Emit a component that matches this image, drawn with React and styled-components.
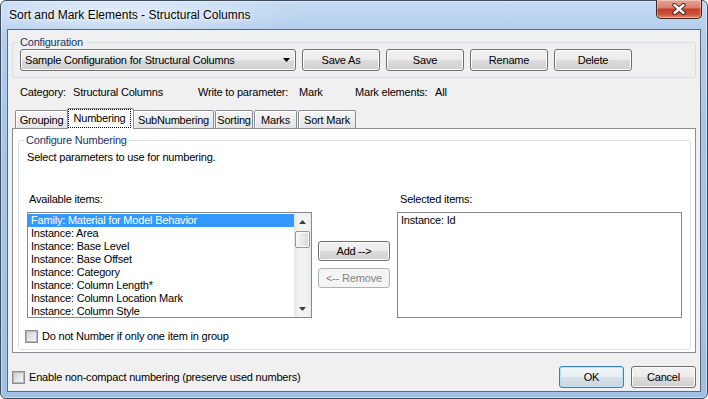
import React from 'react';
import styled, { createGlobalStyle, css } from 'styled-components';

const GlobalStyle = createGlobalStyle`
  html, body { margin: 0; padding: 0; background: #ffffff; }
  body {
    font-family: "Liberation Sans", Arial, sans-serif;
    font-size: 11px;
    letter-spacing: -0.2px;
    color: #000;
  }
  * { box-sizing: border-box; }
`;

const Window = styled.div`
  width: 708px;
  height: 399px;
  display: flex;
  flex-direction: column;
  border: 1px solid #3a4b60;
  border-radius: 6px;
  background:
    radial-gradient(ellipse 260px 40px at 120px 12px, rgba(255,255,255,0.55), rgba(255,255,255,0) 70%),
    linear-gradient(180deg, #c3daf3 0px, #b5cfed 28px, #a7c6e8 120px, #a0c0e3 100%);
  box-shadow: inset 0 0 0 1px rgba(255,255,255,0.45);
`;

const TitleBar = styled.div`
  height: 28px;
  flex: none;
  display: flex;
  align-items: center;
  justify-content: space-between;
  padding-left: 8px;
`;

const Title = styled.div`
  font-size: 12px;
  letter-spacing: 0;
  color: #000;
  text-shadow: 0 0 6px rgba(255,255,255,0.9), 0 0 2px rgba(255,255,255,0.9);
`;

const CloseButton = styled.div`
  align-self: flex-start;
  width: 46px;
  height: 19px;
  margin: -1px 5px 0 0;
  border: 1px solid #4a1f17;
  border-top: none;
  border-radius: 0 0 5px 5px;
  background: linear-gradient(180deg, #e6a597 0%, #d98170 42%, #c2402a 52%, #c9513a 78%, #e08b6c 100%);
  box-shadow: inset 0 0 0 1px rgba(255,255,255,0.35);
  display: flex;
  align-items: center;
  justify-content: center;
`;

const Client = styled.div`
  flex: 1;
  margin: 0 6px 6px 6px;
  border: 1px solid #586a80;
  background: #f0f0f0;
  display: flex;
  flex-direction: column;
  padding: 0 4px;
`;

const GroupBox = styled.div`
  margin-top: ${p => p.$top}px;
  border: 1px solid #d5dfe5;
  border-radius: 3px;
  display: flex;
  flex-direction: column;
  background: ${p => p.$bg};
`;

const GroupTitle = styled.div`
  align-self: flex-start;
  margin: -7px 0 0 ${p => p.$offset}px;
  padding: 0 2px;
  line-height: 13px;
  background: ${p => p.$bg};
  color: #1a3560;
`;

const ConfigRow = styled.div`
  display: flex;
  align-items: center;
  gap: 6px;
  padding: 0 0 6px 7px;
`;

const buttonBase = css`
  height: 22px;
  font: inherit;
  letter-spacing: inherit;
  color: #000;
  border: 1px solid #707070;
  border-radius: 3px;
  background: linear-gradient(180deg, #f2f2f2 0%, #ebebeb 50%, #dddddd 50%, #cfcfcf 100%);
  box-shadow: inset 0 0 0 1px #fcfcfc;
`;

const Combo = styled.div`
  ${buttonBase};
  width: 276px;
  display: flex;
  align-items: center;
  justify-content: space-between;
  padding: 0 5px 0 4px;
  white-space: nowrap;
`;

const Button = styled.button`
  ${buttonBase};
  width: ${p => p.$w}px;
  height: ${p => p.$h || 22}px;
  padding: 0;
  flex: none;
  ${p => p.$default && css`
    border-color: #3c7fb1;
    box-shadow: inset 0 0 0 1px #b6e3fa;
    background: linear-gradient(180deg, #f1f5f8 0%, #e8eef2 50%, #d8e1e8 50%, #cbd6de 100%);
  `}
  ${p => p.disabled && css`
    color: #838383;
    border-color: #adb2b5;
    background: #f4f4f4;
    box-shadow: none;
  `}
`;

const InfoRow = styled.div`
  margin-top: 8px;
  padding-left: 8px;
  display: grid;
  grid-template-columns: 53px 125px 101px 56px 80px auto;
  line-height: 13px;
  white-space: nowrap;
`;

const TabControl = styled.div`
  margin-top: 9px;
  display: flex;
  flex-direction: column;
`;

const TabStrip = styled.div`
  height: 20px;
  display: flex;
  align-items: flex-end;
  gap: 1px;
  padding-left: 3px;
`;

const Tab = styled.div`
  width: ${p => p.$w}px;
  height: 18px;
  flex: none;
  border: 1px solid #898c95;
  border-bottom: none;
  border-radius: 2px 2px 0 0;
  background: linear-gradient(180deg, #f6f6f6 0%, #ececec 55%, #e3e3e3 100%);
  box-shadow: inset 1px 1px 0 #ffffff;
  display: flex;
  align-items: center;
  justify-content: center;
  line-height: 13px;
  padding-top: 1px;
  white-space: nowrap;
  ${p => p.$active && css`
    height: 21px;
    margin: 0 -2px -1px -2px;
    position: relative;
    z-index: 1;
    background: #ffffff;
    box-shadow: none;
    align-items: stretch;
    padding-top: 0;
  `}
`;

const FocusRect = styled.span`
  flex: 1;
  margin: 0 2px 1px 0;
  border: 1px dotted #000;
  display: flex;
  align-items: center;
  justify-content: center;
`;

const TabPanel = styled.div`
  border: 1px solid #898c95;
  background: #ffffff;
  padding: 0 4px 2px 5px;
  display: flex;
  flex-direction: column;
`;

const GroupContent = styled.div`
  padding: 0 8px 6px 8px;
  display: flex;
  flex-direction: column;
`;

const Line = styled.div`
  line-height: 13px;
  margin-top: ${p => p.$top || 0}px;
  white-space: nowrap;
`;

const Columns = styled.div`
  margin-top: 29px;
  display: grid;
  grid-template-columns: 285px 73px 285px;
  column-gap: 6px;
`;

const ListColumn = styled.div`
  display: flex;
  flex-direction: column;
`;

const ListLabel = styled.div`
  line-height: 13px;
  padding-left: ${p => p.$pl}px;
  margin-bottom: 6px;
`;

const ListBox = styled.div`
  height: 106px;
  border: 1px solid #828790;
  background: #ffffff;
  display: flex;
  overflow: hidden;
`;

const ListItems = styled.div`
  flex: 1;
  min-width: 0;
  padding-top: 1px;
  display: flex;
  flex-direction: column;
`;

const ListItem = styled.div`
  height: 13px;
  line-height: 13px;
  flex: none;
  padding-left: 3px;
  white-space: nowrap;
  overflow: hidden;
  ${p => p.$selected && css`
    background: #3399ff;
    color: #ffffff;
  `}
`;

const ScrollBar = styled.div`
  width: 17px;
  flex: none;
  display: flex;
  flex-direction: column;
  background: linear-gradient(90deg, #e6e6e6 0%, #f3f3f3 30%, #f3f3f3 70%, #ececec 100%);
`;

const ScrollArrow = styled.div`
  height: 17px;
  flex: none;
  display: flex;
  align-items: center;
  justify-content: center;
`;

const ScrollThumb = styled.div`
  height: 17px;
  margin: 1px 1px 0 1px;
  border: 1px solid #979797;
  border-radius: 2px;
  background: linear-gradient(90deg, #f5f5f5 0%, #e9e9e9 50%, #d9d9d9 100%);
  box-shadow: inset 0 0 0 1px #fbfbfb;
`;

const ScrollSpacer = styled.div`
  flex: 1;
`;

const MiddleColumn = styled.div`
  padding-top: 48px;
  display: flex;
  flex-direction: column;
  gap: 7px;
`;

const CheckRow = styled.div`
  display: flex;
  align-items: center;
  gap: ${p => p.$gap}px;
  margin: ${p => p.$margin};
  line-height: 13px;
  white-space: nowrap;
`;

const CheckBox = styled.span`
  width: 13px;
  height: 13px;
  flex: none;
  border: 1px solid #8e8f8f;
  background: #f7f7f7;
  display: flex;
  align-items: center;
  justify-content: center;
  &::after {
    content: '';
    width: 9px;
    height: 9px;
    border: 1px solid #b3b6bb;
    background: linear-gradient(135deg, #cdd1d6 0%, #e4e6e8 55%, #f7f7f7 100%);
  }
`;

const BottomRow = styled.div`
  margin-top: 13px;
  height: 22px;
  display: flex;
  align-items: center;
  justify-content: space-between;
`;

const ButtonGroup = styled.div`
  display: flex;
  gap: 7px;
`;

const DownTriangle = ({ color = '#000' }) => (
  <svg width="7" height="4" viewBox="0 0 7 4"><path d="M0 0 H7 L3.5 4 Z" fill={color} /></svg>
);

const UpTriangle = ({ color = '#000' }) => (
  <svg width="7" height="4" viewBox="0 0 7 4"><path d="M0 4 H7 L3.5 0 Z" fill={color} /></svg>
);

const CloseGlyph = () => (
  <svg width="16" height="12" viewBox="0 0 16 12">
    <path d="M3.5 2 L12.5 10 M12.5 2 L3.5 10" stroke="#3b1710" strokeWidth="4.2" strokeLinecap="round" />
    <path d="M3.5 2 L12.5 10 M12.5 2 L3.5 10" stroke="#ffffff" strokeWidth="2.4" strokeLinecap="round" />
  </svg>
);

const availableItems = [
  'Family: Material for Model Behavior',
  'Instance: Area',
  'Instance: Base Level',
  'Instance: Base Offset',
  'Instance: Category',
  'Instance: Column Length*',
  'Instance: Column Location Mark',
  'Instance: Column Style',
];

const tabs = [
  { label: 'Grouping', w: 53 },
  { label: 'Numbering', w: 67, active: true },
  { label: 'SubNumbering', w: 81 },
  { label: 'Sorting', w: 38 },
  { label: 'Marks', w: 43 },
  { label: 'Sort Mark', w: 58 },
];

export default function App() {
  return (
    <>
      <GlobalStyle />
      <Window>
        <TitleBar>
          <Title>Sort and Mark Elements - Structural Columns</Title>
          <CloseButton><CloseGlyph /></CloseButton>
        </TitleBar>
        <Client>
          <GroupBox $top={12} $bg="#f0f0f0">
            <GroupTitle $offset={5} $bg="#f0f0f0">Configuration</GroupTitle>
            <ConfigRow>
              <Combo>
                <span>Sample Configuration for Structural Columns</span>
                <DownTriangle />
              </Combo>
              <Button $w={78}>Save As</Button>
              <Button $w={78}>Save</Button>
              <Button $w={78}>Rename</Button>
              <Button $w={78}>Delete</Button>
            </ConfigRow>
          </GroupBox>

          <InfoRow>
            <span>Category:</span>
            <span>Structural Columns</span>
            <span>Write to parameter:</span>
            <span>Mark</span>
            <span>Mark elements:</span>
            <span>All</span>
          </InfoRow>

          <TabControl>
            <TabStrip>
              {tabs.map(t => (
                <Tab key={t.label} $w={t.w} $active={t.active}>
                  {t.active ? <FocusRect>{t.label}</FocusRect> : t.label}
                </Tab>
              ))}
            </TabStrip>
            <TabPanel>
              <GroupBox $top={11} $bg="#ffffff">
                <GroupTitle $offset={5} $bg="#ffffff">Configure Numbering</GroupTitle>
                <GroupContent>
                  <Line $top={4}>Select parameters to use for numbering.</Line>
                  <Columns>
                    <ListColumn>
                      <ListLabel $pl={2}>Available items:</ListLabel>
                      <ListBox>
                        <ListItems>
                          {availableItems.map((it, i) => (
                            <ListItem key={it} $selected={i === 0}>{it}</ListItem>
                          ))}
                        </ListItems>
                        <ScrollBar>
                          <ScrollArrow><UpTriangle color="#3f3f3f" /></ScrollArrow>
                          <ScrollThumb />
                          <ScrollSpacer />
                          <ScrollArrow><DownTriangle color="#3f3f3f" /></ScrollArrow>
                        </ScrollBar>
                      </ListBox>
                    </ListColumn>
                    <MiddleColumn>
                      <Button $w={72} $h={20}>Add --&gt;</Button>
                      <Button $w={72} $h={20} disabled>&lt;-- Remove</Button>
                    </MiddleColumn>
                    <ListColumn>
                      <ListLabel $pl={3}>Selected items:</ListLabel>
                      <ListBox>
                        <ListItems>
                          <ListItem>Instance: Id</ListItem>
                        </ListItems>
                      </ListBox>
                    </ListColumn>
                  </Columns>
                  <CheckRow $gap={4} $margin="12px 0 0 -2px">
                    <CheckBox />
                    <span>Do not Number if only one item in group</span>
                  </CheckRow>
                </GroupContent>
              </GroupBox>
            </TabPanel>
          </TabControl>

          <BottomRow>
            <CheckRow $gap={4} $margin="0">
              <CheckBox />
              <span>Enable non-compact numbering (preserve used numbers)</span>
            </CheckRow>
            <ButtonGroup>
              <Button $w={65} $default>OK</Button>
              <Button $w={65}>Cancel</Button>
            </ButtonGroup>
          </BottomRow>
        </Client>
      </Window>
    </>
  );
}
